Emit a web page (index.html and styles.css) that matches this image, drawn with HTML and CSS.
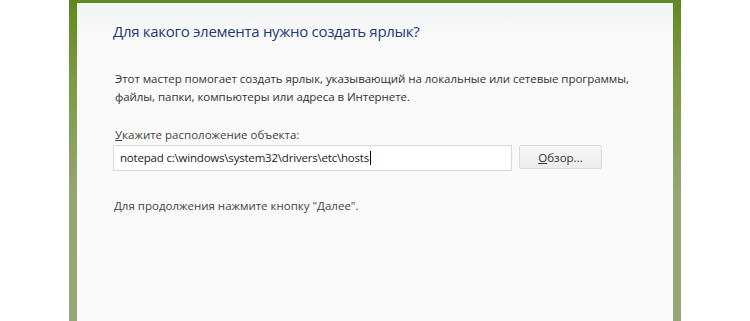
FILE: index.html
```html
<html>
<head>
    <link rel="stylesheet" href="styles.css">
</head>
<body>
    <div class="frame">
        <div class="wizard">
            <h1>Для какого элемента нужно создать ярлык?</h1>
            <p class="intro">Этот мастер помогает создать ярлык, указывающий на локальные или сетевые программы,<br>файлы, папки, компьютеры или адреса в Интернете.</p>
            <label class="field-label" for="location"><u>У</u>кажите расположение объекта:</label>
            <div class="field-row">
                <div class="text-box" id="location">notepad c:\windows\system32\drivers\etc\hosts<span class="caret"></span></div>
                <button class="browse-btn"><u>О</u>бзор...</button>
            </div>
            <p class="hint">Для продолжения нажмите кнопку "Далее".</p>
        </div>
    </div>
</body>
</html>
```

FILE: styles.css
```css
body {
    margin: 0;
    padding: 0;
    background-color: #fff;
    font-family: "Open Sans", "Noto Sans", sans-serif;
    overflow: hidden;
}
.frame {
    margin-left: 69px;
    width: 596px;
    height: 318px;
    padding: 3px 8px 0 8px;
    background: linear-gradient(to bottom, #5f8a1f 0%, #7d9a45 25%, #95a672 60%, #97a676 100%);
}
.wizard {
    height: 100%;
    box-sizing: border-box;
    padding: 17px 0 0 36px;
    background: linear-gradient(to bottom, #f3f4f7 0%, #fafafa 40px, #fafafa 100%);
}
h1 {
    margin: 0;
    font-size: 15px;
    font-weight: normal;
    letter-spacing: -0.3px;
    color: #1e3a78;
    line-height: 22px;
}
.intro {
    margin: 28px 0 0 2px;
    font-size: 11.5px;
    line-height: 18px;
    letter-spacing: -0.05px;
    color: #333;
}
.field-label {
    display: block;
    margin: 21px 0 0 2px;
    font-size: 11.5px;
    line-height: 16px;
    color: #444;
}
.field-row {
    display: flex;
    align-items: flex-start;
    gap: 7px;
    margin-top: 2px;
}
.text-box {
    width: 385px;
    height: 24px;
    padding: 0 6px;
    border: 1px solid #d6d9de;
    background-color: #fff;
    font-size: 11.5px;
    letter-spacing: -0.2px;
    line-height: 24px;
    color: #222;
}
.caret {
    display: inline-block;
    width: 1px;
    height: 14px;
    margin-left: 1px;
    vertical-align: -3px;
    background-color: #000;
}
.browse-btn {
    width: 83px;
    height: 24px;
    border: 1px solid #dcdcdc;
    border-radius: 2px;
    background: linear-gradient(to bottom, #f6f6f6, #ececec);
    font-family: inherit;
    font-size: 11.5px;
    color: #333;
    padding: 0;
}
.hint {
    margin: 27px 0 0 1px;
    font-size: 11.5px;
    line-height: 16px;
    color: #444;
}
```
